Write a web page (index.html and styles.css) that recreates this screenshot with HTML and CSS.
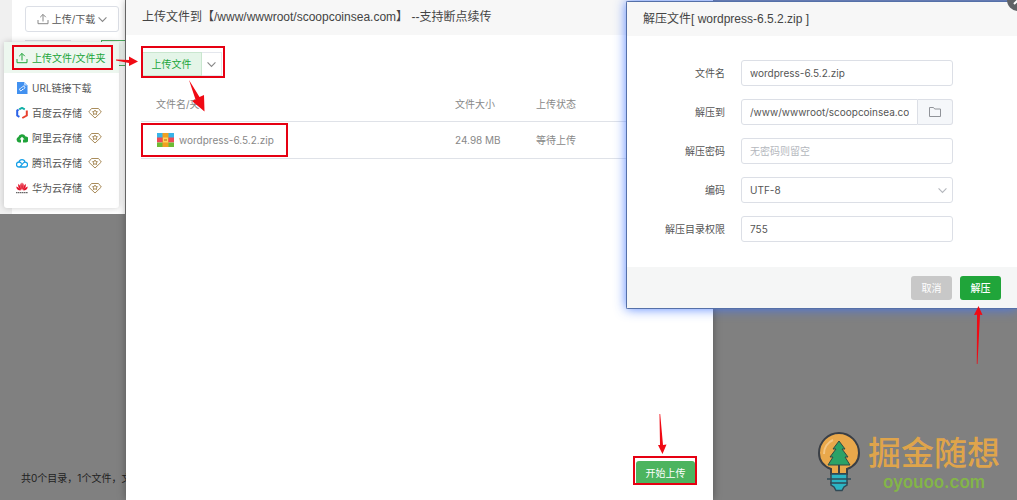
FILE: index.html
```html
<!DOCTYPE html>
<html lang="zh-CN">
<head>
  <meta charset="UTF-8">
  <title>上传文件</title>
  <link rel="stylesheet" href="styles.css">
</head>
<body>
  <div class="desktop">
    <aside class="files">
      <div class="files-panel">
        <div class="toolbar">
          <button class="upload-toggle" type="button">
            <svg class="icon" viewBox="0 0 12 12"><path d="M6 8.5V1.5M3.2 4.2L6 1.4l2.8 2.8M1 7v3.7h10V7"/></svg>
            <span>上传/下载</span>
            <svg class="chevron" viewBox="0 0 8 8"><path d="M.5 2.200l3.500 3.500 3.500-3.500"/></svg>
          </button>
        </div>
        <div class="tabs"><span class="tab"></span><span class="tab active"></span></div>
        <nav class="menu">
          <a class="menu-item current" href="#">
            <svg class="icon" viewBox="0 0 12 12"><path d="M6 8.5V1.5M3.2 4.2L6 1.4l2.8 2.8M1 7v3.7h10V7"/></svg>
            <span>上传文件/文件夹</span>
            <i class="mark"></i>
          </a>
          <a class="menu-item" href="#">
            <svg class="icon brand" viewBox="0 0 12 12"><path fill="#4291f0" d="M1 0h7l3.500 3.500V12H1z"/><path fill="#a9d0ff" d="M8 0l3.500 3.500H8z"/><path fill="none" stroke="#fff" d="M5.500 5.800L6.700 4.600a1.200 1.200 0 0 1 1.700 1.700L7.200 7.500M7 7L5.700 8.400A1.200 1.200 0 0 1 4 6.700l1-1"/></svg>
            <span>URL链接下载</span>
          </a>
          <a class="menu-item" href="#">
            <svg class="icon brand" viewBox="0 0 12 12"><g fill="none" stroke-width="2"><path stroke="#12b0a6" d="M3.200 2.300L6 .9l2.800 1.400"/><path stroke="#2a62e8" d="M2.600 2.700L1.200 3.500v5l2.200 1.300"/><path stroke="#e8402d" d="M10.800 3.500v5L6.300 11"/></g></svg>
            <span>百度云存储</span>
            <svg class="vip" viewBox="0 0 14 12"><path d="M3.500 1.500h7L13.300 5 7 11 .7 5z"/><path d="M7 3l.8 1.500 1.700.2-1.200 1.200.3 1.700L7 6.800l-1.600.8.3-1.700-1.200-1.200 1.700-.2z"/></svg>
          </a>
          <a class="menu-item" href="#">
            <svg class="icon brand" viewBox="0 0 12 12"><path fill="#20a33a" d="M3 10.500A2.900 2.900 0 0 1 2.300 5 3.900 3.900 0 0 1 9.600 4.500 3 3 0 0 1 9.500 10.500H7V7.500h1.500L6 4.800 3.500 7.500H5v3z"/></svg>
            <span>阿里云存储</span>
            <svg class="vip" viewBox="0 0 14 12"><path d="M3.500 1.500h7L13.300 5 7 11 .7 5z"/><path d="M7 3l.8 1.500 1.700.2-1.200 1.200.3 1.700L7 6.800l-1.600.8.3-1.700-1.200-1.200 1.700-.2z"/></svg>
          </a>
          <a class="menu-item" href="#">
            <svg class="icon brand" viewBox="0 0 12 12"><path fill="none" stroke="#159fe6" stroke-width="1.300" d="M3 5a2.500 2.500 0 0 0 0 5h6.300A2.400 2.400 0 0 0 9 5.200c-1.600 0-2.300 1.500-5 4.600M3 5a3.100 3.100 0 0 1 6 0M3 5c1.300 0 2 .8 2.700 1.600"/></svg>
            <span>腾讯云存储</span>
            <svg class="vip" viewBox="0 0 14 12"><path d="M3.500 1.500h7L13.300 5 7 11 .7 5z"/><path d="M7 3l.8 1.500 1.700.2-1.200 1.200.3 1.700L7 6.800l-1.600.8.3-1.700-1.200-1.200 1.700-.2z"/></svg>
          </a>
          <a class="menu-item" href="#">
            <svg class="icon brand" viewBox="0 0 12 12"><g fill="#e4132b"><path d="M5.700 8.200C3.800 5 3.700 2 5.400.5 6 3 6 5.500 5.700 8.200zM6.300 8.200C8.200 5 8.300 2 6.600.5 6 3 6 5.500 6.300 8.200z"/><path d="M5.200 8.300C2.400 6.500 1.600 4 2.500 1.700 4.200 3.500 5 5.500 5.200 8.300zM6.800 8.300c2.800-1.800 3.600-4.300 2.700-6.600C7.800 3.500 7 5.500 6.800 8.300z"/><path d="M4.800 8.600C2 8.600.3 7 .3 4.500 2.600 5.300 4 6.800 4.800 8.600zM7.200 8.600c2.800 0 4.500-1.600 4.500-4.100C9.400 5.300 8 6.800 7.200 8.600z"/></g><path stroke="#444" stroke-dasharray="1.500 .4" d="M0 10.700h12"/></svg>
            <span>华为云存储</span>
            <svg class="vip" viewBox="0 0 14 12"><path d="M3.500 1.500h7L13.300 5 7 11 .7 5z"/><path d="M7 3l.8 1.500 1.700.2-1.200 1.200.3 1.700L7 6.800l-1.600.8.3-1.700-1.200-1.200 1.700-.2z"/></svg>
          </a>
        </nav>
      </div>
      <p class="summary">共0个目录，1个文件，文</p>
    </aside>

    <section class="upload">
      <h2 class="window-title">上传文件到【/www/wwwroot/scoopcoinsea.com】 --支持断点续传</h2>
      <div class="upload-body">
        <div class="split">
          <button class="split-main" type="button">上传文件</button>
          <button class="split-more" type="button" aria-label="更多">
            <svg class="chevron" viewBox="0 0 8 8"><path d="M.5 2.200l3.500 3.500 3.500-3.500"/></svg>
          </button>
          <i class="mark"></i>
          <svg class="arrow arrow-right" viewBox="0 0 22 10"><path d="M0 3.500l13 .5V.5l9 5L13 10V7L0 4.500z"/></svg>
          <svg class="arrow arrow-row" viewBox="0 0 18 32"><path d="M0 0l10.500 17 4.500-2 .5 16.500L3 21l3.500-1.500z"/></svg>
        </div>
        <table class="queue">
          <thead>
            <tr><th class="col-name">文件名/夹</th><th class="col-size">文件大小</th><th>上传状态</th></tr>
          </thead>
          <tbody>
            <tr>
              <td>
                <div class="file">
                  <svg class="zip" viewBox="0 0 17 14"><path fill="#38b3e8" d="M0 0h17v5H0z"/><path fill="#ee4a56" d="M0 4.500h17v5H0z"/><path fill="#6dbb34" d="M0 9.500h17V14H0z"/><path fill="#f0a020" d="M5.500 0h6v14h-6z"/><path fill="#ffd45c" d="M6 4.500h5v5H6z"/><path fill="#b06010" d="M7 6.500h3v1H7z"/></svg>
                  <span>wordpress-6.5.2.zip</span>
                  <i class="mark"></i>
                </div>
              </td>
              <td>24.98 MB</td>
              <td>等待上传</td>
            </tr>
          </tbody>
        </table>
      </div>
      <div class="upload-foot">
        <div class="start-wrap">
          <button class="start" type="button">开始上传</button>
          <i class="mark"></i>
          <svg class="arrow arrow-start" viewBox="0 0 10 40"><path d="M2.500 0h.7L6 31l3.500-.5L5.500 40 1 31l2-.1z"/></svg>
        </div>
      </div>
    </section>

    <footer class="brand-area">
      <svg class="bulb" viewBox="0 0 42 60">
        <path fill="#e9a84b" stroke="#3a3f46" stroke-width="2" d="M13 42V37C5 34 1 28 1 21a20 20 0 0 1 40 0c0 7-4 13-12 16v5z"/>
        <path fill="none" stroke="#f4c684" stroke-width="2" d="M6 22A15 15 0 0 1 15 8"/>
        <path fill="#2ba267" stroke="#304a46" d="M21 9l6 8h-3l6 8h-3l5 8H10l5-8h-3l6-8h-3z"/>
        <path fill="none" stroke="#3a3f46" stroke-width="2" d="M21 33v10"/>
        <path fill="#2bb5c4" stroke="#304a56" stroke-width="1.500" d="M13 42h16v11l-3 2-2 3.500h-6L16 55l-3-2z"/>
        <path fill="none" stroke="#304a56" stroke-width="1.500" d="M9 47h24M12 51h18"/>
      </svg>
      <div class="brand-text">
        <strong>掘金随想</strong>
        <span>oyouoo.com</span>
      </div>
    </footer>

    <form class="dialog">
      <h2 class="window-title">解压文件[ wordpress-6.5.2.zip ]</h2>
      <button class="close" type="button" aria-label="关闭">
        <svg viewBox="0 0 22 22"><path d="M7 7l8 8M15 7l-8 8"/></svg>
      </button>
      <div class="fields">
        <div class="field">
          <label for="name">文件名</label>
          <input id="name" type="text" value="wordpress-6.5.2.zip">
        </div>
        <div class="field">
          <label for="path">解压到</label>
          <div class="path">
            <input id="path" type="text" value="/www/wwwroot/scoopcoinsea.com">
            <button type="button" aria-label="选择目录">
              <svg class="folder" viewBox="0 0 12 10"><path d="M.5.500h4l1.200 1.500h5.800v7.500H.5z"/></svg>
            </button>
          </div>
        </div>
        <div class="field">
          <label for="password">解压密码</label>
          <input id="password" type="text" placeholder="无密码则留空">
        </div>
        <div class="field">
          <label for="encoding">编码</label>
          <div class="select">
            <select id="encoding"><option>UTF-8</option></select>
            <svg class="chevron" viewBox="0 0 8 8"><path d="M.5 2.200l3.500 3.500 3.500-3.500"/></svg>
          </div>
        </div>
        <div class="field">
          <label for="mode">解压目录权限</label>
          <input id="mode" type="text" value="755">
        </div>
      </div>
      <div class="dialog-foot">
        <button class="cancel" type="button">取消</button>
        <button class="confirm" type="button">解压</button>
      </div>
      <svg class="arrow arrow-confirm" viewBox="0 0 10 58"><path d="M5.500 0l4 9-2.500-.3L4.500 58h-.7L4 8.700 1 9z"/></svg>
    </form>
  </div>
</body>
</html>
```
FILE: styles.css
```css
* {
  box-sizing: border-box;
}

body {
  margin: 0;
  background-color: #808080;
  color: #555;
  font-family: Inter, "Noto Sans CJK SC", sans-serif;
  font-size: 10px;
  line-height: 16px;
}

button, input, select {
  font: inherit;
  color: inherit;
  margin: 0;
}

button {
  padding: 0;
  cursor: pointer;
}

svg {
  display: block;
  flex: none;
}

.desktop {
  position: relative;
  display: grid;
  grid-template-columns: 126px minmax(0, 587fr) minmax(0, 304fr);
  min-height: 100vh;
  overflow: hidden;
}

.icon {
  width: 12px;
  height: 12px;
}

.icon, .chevron, .vip, .folder {
  fill: none;
  stroke: currentColor;
}

.icon.brand {
  stroke: none;
}

.chevron {
  width: 9px;
  height: 9px;
  color: #888;
}

/* red boxes and arrows of the walkthrough */
.mark {
  position: absolute;
  border: 2px solid #e60012;
  pointer-events: none;
}

.arrow {
  position: absolute;
  fill: #f00a14;
  z-index: 3;
}

/* file list */
.files {
  display: flex;
  flex-direction: column;
  justify-content: space-between;
}

.files-panel {
  position: relative;
  height: 214px;
  background-color: #fff;
  border-left: 12px solid #f0f0f0;
  border-right: 1px solid #777;
}

.toolbar {
  padding: 6px 6px 8px 13px;
}

.upload-toggle {
  display: flex;
  align-items: center;
  justify-content: center;
  gap: 3px;
  width: 100%;
  height: 26px;
  background-color: #fff;
  border: 1px solid #dcdfe6;
  border-radius: 3px;
}

.upload-toggle .icon {
  color: #888;
}

.tabs {
  display: flex;
  justify-content: space-between;
  padding-left: 13px;
}

.tab {
  width: 46px;
  height: 26px;
  border-top: 1px solid #dcdfe6;
}

.tab.active {
  width: 24px;
  border: 1px solid #4caf5f;
  border-right: 0;
  background-color: #f2faf4;
}

.menu {
  position: absolute;
  top: 42px;
  left: -8px;
  right: 6px;
  padding-bottom: 8px;
  background-color: #fff;
  border-radius: 3px;
  box-shadow: 0 0 6px rgba(0, 0, 0, 0.2);
}

.menu-item {
  display: flex;
  align-items: center;
  gap: 4px;
  height: 25px;
  padding-left: 12px;
  color: #555;
  text-decoration: none;
  white-space: nowrap;
}

.menu-item.current {
  position: relative;
  height: 31px;
  margin-bottom: 2px;
  background-color: #edf7ef;
  color: #20a53a;
}

.menu-item .mark {
  inset: 3px 6px 3px 8px;
}

.vip {
  width: 14px;
  height: 12px;
  margin-left: 2px;
  color: #a98c5b;
}

.summary {
  margin: 0;
  padding: 0 0 14px 21px;
  color: #222;
  white-space: nowrap;
}

/* upload window */
.upload {
  position: relative;
  display: flex;
  flex-direction: column;
  background-color: #fff;
  box-shadow: 0 0 8px rgba(0, 0, 0, 0.35);
}

.window-title {
  margin: 0;
  padding: 0 16px;
  background-color: #f7f7f7;
  color: #444;
  font-family: "Liberation Sans", "Noto Sans CJK SC", sans-serif;
  font-size: 12px;
  font-weight: 400;
  line-height: 35px;
  white-space: nowrap;
}

.upload-body {
  flex: 1;
  padding: 17px 15px;
}

.split {
  position: relative;
  display: flex;
  width: 81px;
  height: 24px;
}

.split-main {
  flex: 1;
  background-color: #e4f5e8;
  border: 1px solid #c9e6cf;
  color: #20a53a;
}

.split-more {
  display: flex;
  align-items: center;
  justify-content: center;
  width: 20px;
  background-color: #fff;
  border: 1px solid #e4e7ed;
  border-left: 0;
}

.split .mark {
  inset: -6px -3px -2px 0;
}

.arrow-right {
  top: 4px;
  left: -25px;
  width: 22px;
  height: 10px;
}

.arrow-row {
  top: 28px;
  left: 48px;
  width: 18px;
  height: 32px;
}

.queue {
  width: 100%;
  margin-top: 11px;
  border-collapse: collapse;
  table-layout: fixed;
  color: #888;
}

.queue th, .queue td {
  padding: 0;
  border-bottom: 1px solid #dfe2e8;
  font-weight: 400;
  text-align: left;
}

.queue th {
  height: 34px;
}

.queue td {
  height: 37px;
}

.queue .col-name {
  width: 314px;
  padding-left: 15px;
}

.queue .col-size {
  width: 81px;
}

.file {
  position: relative;
  display: flex;
  align-items: center;
  gap: 5px;
  width: 147px;
  height: 34px;
  padding-left: 16px;
}

.file .mark {
  inset: 0;
}

.zip {
  width: 17px;
  height: 14px;
}

.upload-foot {
  display: flex;
  justify-content: flex-end;
  padding: 0 18px 15px;
}

.start-wrap {
  position: relative;
}

.start {
  width: 59px;
  height: 24px;
  background-color: #4cb45f;
  border: 0;
  border-radius: 3px;
  color: #fff;
}

.start-wrap .mark {
  inset: -5px -2px 0 -3px;
}

.arrow-start {
  top: -47px;
  left: 21px;
  width: 10px;
  height: 40px;
}

/* logo */
.brand-area {
  display: flex;
  align-items: flex-end;
  justify-content: flex-end;
  gap: 8px;
  padding: 0 17px 8px;
}

.bulb {
  width: 42px;
  height: 60px;
}

.brand-text {
  display: flex;
  flex-direction: column;
  align-items: center;
  white-space: nowrap;
}

.brand-text strong {
  color: #dfa44b;
  font-size: 33px;
  font-weight: 500;
  line-height: 38px;
}

.brand-text span {
  color: #83b548;
  font-size: 17px;
  font-weight: 600;
  line-height: 20px;
}

/* extract dialog */
.dialog {
  position: absolute;
  top: 1px;
  right: 0;
  width: 391px;
  background-color: #fff;
  border: 1px solid #5570a8;
  border-right: 0;
  border-radius: 2px 0 0 2px;
  box-shadow: 0 0 12px rgba(60, 115, 255, 0.85);
}

.dialog .window-title {
  line-height: 34px;
}

.close {
  position: absolute;
  top: -13px;
  right: -12px;
  width: 22px;
  height: 22px;
  background-color: #606266;
  border: 0;
  border-radius: 50%;
}

.close svg {
  stroke: #fff;
  stroke-width: 2;
}

.fields {
  display: flex;
  flex-direction: column;
  gap: 13px;
  padding: 24px 64px 25px 0;
}

.field {
  display: grid;
  grid-template-columns: 98px minmax(0, 1fr);
  align-items: center;
  gap: 16px;
}

.field label {
  text-align: right;
}

.field input, .field select {
  width: 100%;
  height: 26px;
  padding: 0 8px;
  background-color: #fff;
  border: 1px solid #dcdfe6;
  border-radius: 3px;
  outline: 0;
}

.field input::placeholder {
  color: #b4b7bd;
}

.path {
  display: flex;
}

.path input {
  flex: 1;
  min-width: 0;
  border-radius: 3px 0 0 3px;
}

.path button {
  display: flex;
  align-items: center;
  justify-content: center;
  width: 35px;
  background-color: #f5f7fa;
  border: 1px solid #dcdfe6;
  border-left: 0;
  border-radius: 0 3px 3px 0;
}

.folder {
  width: 12px;
  height: 10px;
  color: #909399;
}

.select {
  display: grid;
  align-items: center;
}

.select select, .select .chevron {
  grid-area: 1 / 1;
}

.select select {
  appearance: none;
}

.select .chevron {
  justify-self: end;
  margin-right: 6px;
  color: #b4b7bd;
  pointer-events: none;
}

.dialog-foot {
  display: flex;
  justify-content: flex-end;
  gap: 8px;
  padding: 9px 16px 8px;
  background-color: #f5f6f6;
}

.dialog-foot button {
  width: 41px;
  height: 24px;
  border: 0;
  border-radius: 3px;
  color: #fff;
}

.dialog-foot .cancel {
  background-color: #c8c8c8;
}

.dialog-foot .confirm {
  background-color: #20a53a;
  font-weight: 500;
}

.arrow-confirm {
  right: 34px;
  bottom: -56px;
  width: 10px;
  height: 58px;
}
```
